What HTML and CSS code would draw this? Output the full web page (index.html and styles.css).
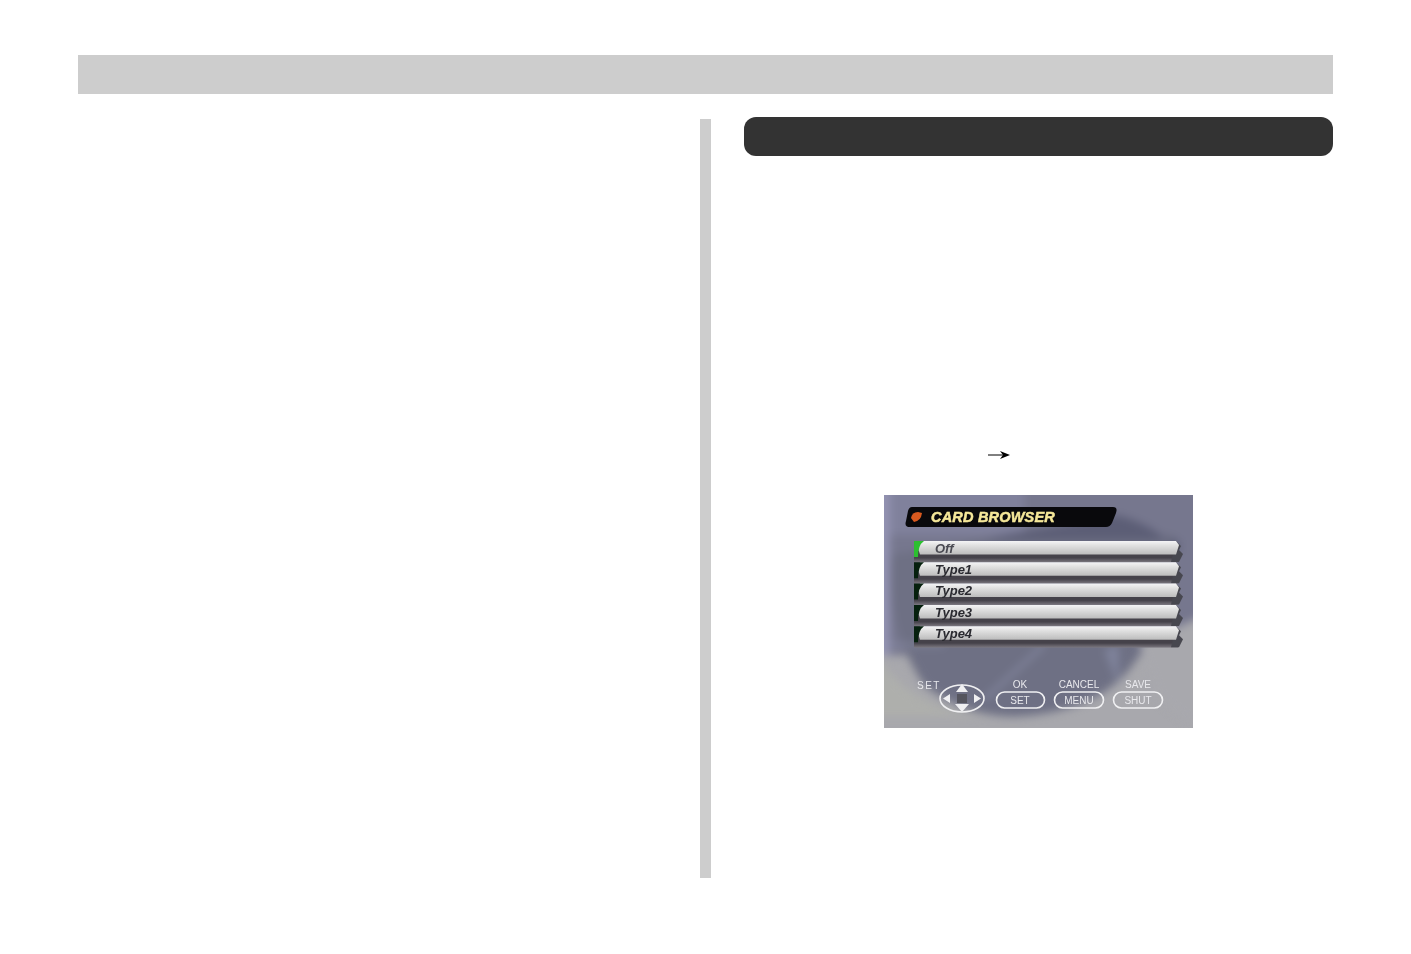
FILE: index.html
```html
<!DOCTYPE html>
<html lang="en">
<head>
<meta charset="utf-8">
<title>Card Browser</title>
<link rel="stylesheet" href="styles.css">
</head>
<body>
<div class="page">
  <div class="top-band"></div>
  <div class="columns">
    <div class="left-col"></div>
    <div class="divider"></div>
    <div class="right-col">
      <div class="heading-bar"></div>
      <div class="arrow-line">
        <svg class="arrow" viewBox="0 0 22 10" width="22" height="10"><path d="M0 5H17" stroke="#000" stroke-width="1" fill="none"/><path d="M12 1L22 5L12 9L15 5Z" fill="#000"/></svg>
      </div>
      <div class="screen-wrap">
        <svg class="screen" viewBox="0 0 309 233" width="309" height="233">
          <defs>
            <linearGradient id="row" x1="0" y1="0" x2="0" y2="1">
              <stop offset="0" stop-color="#f4f4f6"/>
              <stop offset="0.3" stop-color="#e2e2e2"/>
              <stop offset="1" stop-color="#bcbcbc"/>
            </linearGradient>
            <linearGradient id="band" x1="0" y1="0" x2="0" y2="1">
              <stop offset="0" stop-color="#45424a"/>
              <stop offset="0.6" stop-color="#45424a"/>
              <stop offset="1" stop-color="#7c7880"/>
            </linearGradient>
            <g id="rowshape">
              <rect x="30" y="10" width="264" height="11.3" fill="url(#band)"/>
              <path d="M292 0L297 5L295 9L299 13L295 21L287 21Z" fill="#47474f"/>
              <path d="M36 0H292L295 4L292 13.5H36Q33 6 36 0Z" fill="url(#row)"/>
            </g>
            <path id="wedge" d="M30 0H40Q34 4 34 16H30Z"/>
          </defs>
          <rect width="309" height="233" fill="#a8a8ad"/>
          <g class="soft">
            <rect x="-10" y="-10" width="330" height="170" fill="#76778e"/>
            <rect x="-10" y="-10" width="150" height="50" fill="#80819c"/>
            <rect x="-10" y="-10" width="16" height="170" fill="#9393b2"/>
            <path d="M-10 155Q30 225 130 222H-10Z" fill="#aeafac"/>
            <path d="M8 60Q0 130 40 190Q90 228 150 220Q230 210 258 155L290 120L290 40L120 40Z" fill="#6e7084"/>
            <path d="M232 20Q275 30 295 60L295 45H100L120 40Z" fill="#5c5e76"/>
            <path d="M255 150L275 205L320 240V120Z" fill="#a8a8ad"/>
            <path d="M220 155L235 150L234 190Z" fill="#8a90aa" opacity="0.6"/>
            <path d="M160 150L100 205" stroke="#8e92ac" stroke-width="4" fill="none" opacity="0.6"/>
            <path d="M0 150H60" stroke="#9ea2bc" stroke-width="2" fill="none" opacity="0.7"/>
          </g>
          <g class="sharp">
            <path d="M28 12H229Q234 12 232 18L228 28Q226 32 222 32H26Q20 32 22 26L24 16Q25 12 28 12Z" fill="#09090c"/>
            <path d="M27 23Q28 17 34 17L38 18Q37 26 30 27Z" fill="#d8591f"/>
            <text class="title" x="47" y="26.5">CARD BROWSER</text>

            <g transform="translate(0 46)"><use href="#rowshape"/><use href="#wedge" fill="#2cc030"/><text class="item item-on" x="51" y="11.5">Off</text></g>
            <g transform="translate(0 67.3)"><use href="#rowshape"/><use href="#wedge" fill="#06200e"/><text class="item" x="51" y="11.5">Type1</text></g>
            <g transform="translate(0 88.6)"><use href="#rowshape"/><use href="#wedge" fill="#06200e"/><text class="item" x="51" y="11.5">Type2</text></g>
            <g transform="translate(0 110)"><use href="#rowshape"/><use href="#wedge" fill="#06200e"/><text class="item" x="51" y="11.5">Type3</text></g>
            <g transform="translate(0 131.3)"><use href="#rowshape"/><use href="#wedge" fill="#06200e"/><text class="item" x="51" y="11.5">Type4</text></g>

            <text class="label label-wide" x="45" y="194" text-anchor="middle">SET</text>
            <text class="label" x="136" y="193" text-anchor="middle">OK</text>
            <text class="label" x="195" y="193" text-anchor="middle">CANCEL</text>
            <text class="label" x="254" y="193" text-anchor="middle">SAVE</text>

            <ellipse class="pill" cx="78" cy="203.5" rx="22" ry="13.5"/>
            <path d="M78 189L84 197H72ZM78 217L71 209H85ZM59 203.5L66 199V208ZM97 203.5L90 199V208Z" fill="#f0f0f2"/>
            <rect x="73" y="199" width="10" height="9" fill="#55555e"/>
            <rect class="pill" x="112.5" y="197" width="48" height="16" rx="8"/>
            <rect class="pill" x="170.5" y="197" width="49" height="16" rx="8"/>
            <rect class="pill" x="229.5" y="197" width="49" height="16" rx="8"/>
            <text class="label" x="136" y="209" text-anchor="middle">SET</text>
            <text class="label" x="195" y="209" text-anchor="middle">MENU</text>
            <text class="label" x="254" y="209" text-anchor="middle">SHUT</text>
          </g>
        </svg>
      </div>
    </div>
  </div>
</div>
</body>
</html>
```
FILE: styles.css
```css
html, body {
  margin: 0;
  padding: 0;
  background: #fff;
}
.page {
  padding: 55px 78px 0;
  font-family: "Liberation Sans", sans-serif;
}
.top-band {
  height: 39px;
  background: #cdcdcd;
}
.columns {
  display: flex;
  align-items: flex-start;
  margin-top: 23px;
}
.left-col {
  width: 622px;
  flex: none;
}
.divider {
  width: 11px;
  height: 759px;
  margin-top: 2px;
  background: #cdcdcd;
  flex: none;
}
.right-col {
  margin-left: 33px;
  flex: 1;
  display: flex;
  flex-direction: column;
}
.heading-bar {
  height: 39px;
  background: #333;
  border-radius: 12px;
}
.arrow-line {
  height: 10px;
  margin-top: 294px;
  padding-left: 244px;
}
.arrow {
  display: block;
}
.screen-wrap {
  margin-top: 35px;
  padding-left: 140px;
  line-height: 0;
}
.screen {
  display: block;
  font-family: "Liberation Sans", sans-serif;
}
.soft {
  filter: blur(4px);
}
.sharp {
  filter: blur(0.55px);
}
.title {
  font-size: 14.5px;
  font-weight: 700;
  font-style: italic;
  fill: #f6e89a;
  stroke: #f6e89a;
  stroke-width: 0.5px;
  letter-spacing: 0.2px;
}
.item {
  font-size: 13px;
  font-style: italic;
  font-weight: 700;
  fill: #2a2a30;
}
.item-on {
  fill: #4a4a52;
}
.label {
  font-size: 10px;
  fill: #e8e8ec;
}
.label-wide {
  letter-spacing: 1.5px;
}
.pill {
  fill: none;
  stroke: #f0f0f2;
  stroke-width: 1.6;
}
```
